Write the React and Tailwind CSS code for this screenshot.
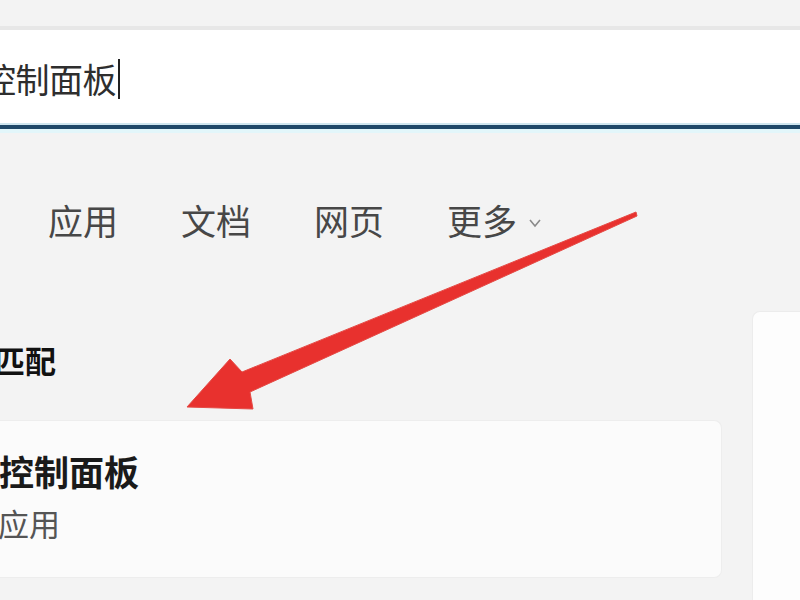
import React from "react";

const font = { fontFamily: '"Noto Sans CJK SC", "Noto Sans", sans-serif' };

export default function App() {
  return (
    <div className="relative w-[800px] h-[600px] overflow-hidden bg-[#f3f3f3]" style={font}>
      {/* top strip */}
      <div className="h-[30px] bg-[#f3f3f3] border-b-[4px] border-[#e7e7e7]" />
      {/* search box */}
      <div className="h-[93px] bg-white flex items-center pt-[4px]">
        <span className="-ml-[18px] text-[34px] leading-none text-[#2e2e2e] tracking-[-0.5px]">控制面板</span>
        <span className="ml-[2px] w-[2px] h-[40px] bg-[#222]" />
      </div>
      <div className="h-[2px] bg-[#cfe6ef]" />
      <div className="h-[4px] bg-[#1f4868]" />
      <div className="h-[4px] bg-[#e2f6fa]" />

      {/* tabs */}
      <div className="flex items-center gap-[63px] pl-[48px] mt-[69px] text-[35px] leading-none text-[#474747]">
        <span>应用</span>
        <span>文档</span>
        <span>网页</span>
        <span className="flex items-center">
          更多
          <svg className="ml-[8px] mt-[6px]" width="20" height="10" viewBox="0 0 20 10" fill="none">
            <path d="M5 2 L10 8 L15 2" stroke="#8a8a8a" strokeWidth="1.6" />
          </svg>
        </span>
      </div>

      {/* content */}
      <div className="flex mt-[64px]">
        <div className="w-[722px] flex flex-col">
          <div className="-ml-[68px] mt-[43px] text-[31px] leading-none font-bold text-[#111]">最佳匹配</div>
          <div className="mt-[45px] h-[158px] bg-[#fbfbfb] rounded-r-lg border border-l-0 border-[#ededed] flex flex-col pt-[32px]">
            <div className="-ml-[1px] text-[35px] leading-none font-bold text-[#1a1a1a]">控制面板</div>
            <div className="mt-[19px] -ml-[2px] text-[31px] leading-none text-[#555]">应用</div>
          </div>
        </div>
        <div className="ml-[30px] mt-[10px] flex-1 h-[300px] bg-[#fdfdfd] border-l border-t border-[#ececec] rounded-tl-lg" />
      </div>

      {/* annotation arrow */}
      <svg className="absolute left-0 top-0 pointer-events-none" width="800" height="600" viewBox="0 0 800 600">
        <polygon
          points="636,212 242,372 230,359 187,407 253,409 250,392 637,216"
          fill="#e8312e"
          stroke="#e54a45"
          strokeWidth="1"
          strokeLinejoin="round"
        />
      </svg>
    </div>
  );
}
